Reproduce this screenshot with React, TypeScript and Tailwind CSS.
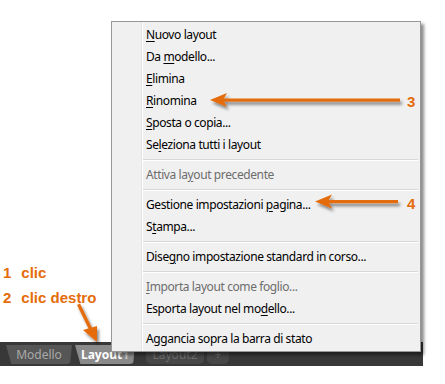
const orange = "#e46c0a";

type Item =
  | { kind: "item"; pre: string; key?: string; post?: string; disabled?: boolean }
  | { kind: "sep" };

const items: Item[] = [
  { kind: "item", pre: "", key: "N", post: "uovo layout" },
  { kind: "item", pre: "Da ", key: "m", post: "odello..." },
  { kind: "item", pre: "", key: "E", post: "limina" },
  { kind: "item", pre: "", key: "R", post: "inomina" },
  { kind: "item", pre: "", key: "S", post: "posta o copia..." },
  { kind: "item", pre: "Se", key: "l", post: "eziona tutti i layout" },
  { kind: "sep" },
  { kind: "item", pre: "Attiva la", key: "y", post: "out precedente", disabled: true },
  { kind: "sep" },
  { kind: "item", pre: "Gestione impostazioni ", key: "p", post: "agina..." },
  { kind: "item", pre: "S", key: "t", post: "ampa..." },
  { kind: "sep" },
  { kind: "item", pre: "Dise", key: "g", post: "no impostazione standard in corso..." },
  { kind: "sep" },
  { kind: "item", pre: "", key: "I", post: "mporta layout come foglio...", disabled: true },
  { kind: "item", pre: "Esporta layout nel mo", key: "d", post: "ello..." },
  { kind: "sep" },
  { kind: "item", pre: "Aggancia sopra la barra di stato" },
];

function ContextMenu() {
  return (
    <div className="absolute left-[111px] top-[21px] z-10 w-[310px] border border-[#979797] bg-[#f0f0f0] shadow-[3px_3px_3px_rgba(0,0,0,0.45)]">
      <div className="relative pt-[2px] pb-[1px]">
        <div className="absolute top-0 bottom-0 left-[29px] w-[2px] border-l border-[#e2e3e3] bg-white" />
        {items.map((it, i) =>
          it.kind === "sep" ? (
            <div key={i} className="flex h-[8px] flex-col justify-center pl-[30px] pr-[2px]">
              <div className="h-[1px] bg-[#d7d7d7]" />
              <div className="h-[1px] bg-white" />
            </div>
          ) : (
            <div
              key={i}
              className={
                "relative flex h-[22px] items-center pl-[34px] text-[12px] tracking-[-0.4px] " +
                (it.disabled ? "text-[#6d6d6d]" : "text-black")
              }
            >
              <span>
                {it.pre}
                {it.key && <u className="underline-offset-[2px]">{it.key}</u>}
                {it.post}
              </span>
            </div>
          )
        )}
      </div>
    </div>
  );
}

function Annotations() {
  return (
    <>
      <svg
        className="pointer-events-none absolute inset-0 z-20"
        width="445"
        height="384"
        viewBox="0 0 445 384"
      >
        <defs>
          <filter id="sh" x="-20%" y="-50%" width="140%" height="200%">
            <feDropShadow dx="2" dy="3" stdDeviation="1.5" floodColor="#000" floodOpacity="0.45" />
          </filter>
        </defs>
        <g filter="url(#sh)" fill={orange} stroke="none">
          <rect x="222" y="98.5" width="178" height="3.2" />
          <path d="M210 100 L227 93 L223 100 L227 107 Z" />
          <rect x="328" y="200" width="70" height="3.2" />
          <path d="M315 201.6 L332 194.6 L328 201.6 L332 208.6 Z" />
          <path d="M77 305 L80 303.5 L92 328 L89 329.5 Z" />
          <path d="M97 342 L83 330 L90 328 L97 326 Z" />
        </g>
      </svg>
      <div className="absolute left-[407px] top-[94px] z-20 font-['Liberation_Sans',Arial,sans-serif] text-[15px] leading-none font-bold text-[#e46c0a]">
        3
      </div>
      <div className="absolute left-[407px] top-[196px] z-20 font-['Liberation_Sans',Arial,sans-serif] text-[15px] leading-none font-bold text-[#e46c0a]">
        4
      </div>
      <div className="absolute left-[3px] top-[265px] z-20 flex gap-[10px] font-['Liberation_Sans',Arial,sans-serif] text-[15px] leading-none font-bold text-[#e46c0a]">
        <span>1</span>
        <span>clic</span>
      </div>
      <div className="absolute left-[3px] top-[290px] z-20 flex gap-[10px] font-['Liberation_Sans',Arial,sans-serif] text-[15px] leading-none font-bold text-[#e46c0a]">
        <span>2</span>
        <span>clic destro</span>
      </div>
    </>
  );
}

function TabBar() {
  return (
    <div className="flex h-[24px] w-[423px] items-start gap-[3px] bg-[#383838] pl-[6px] pt-[3px] text-[12px]">
      <div className="flex h-[19px] w-[66px] items-center justify-center rounded-b-[5px] bg-[#565656] text-[#a9a9a9] [clip-path:polygon(0_0,100%_0,97%_100%,8%_100%)]">
        Modello
      </div>
      <div className="flex h-[19px] w-[60px] items-center justify-center rounded-b-[5px] bg-[#8a8a8a] font-bold text-white [clip-path:polygon(0_0,100%_0,97%_100%,9%_100%)]">
        Layout<span className="text-[#c8c8c8]">1</span>
      </div>
      <div className="ml-[8px] flex h-[19px] w-[58px] items-center justify-center rounded-b-[5px] bg-[#474747] text-[#6c6c6c]">
        Layout2
      </div>
      <div className="flex h-[19px] w-[22px] items-center justify-center rounded-b-[5px] bg-[#474747] text-[#6c6c6c]">
        +
      </div>
    </div>
  );
}

export default function App() {
  return (
    <div className="relative h-[384px] w-[445px] overflow-hidden bg-white font-['Noto_Sans','Open_Sans',sans-serif]">
      <div className="h-[342px]" />
      <TabBar />
      <ContextMenu />
      <Annotations />
    </div>
  );
}
